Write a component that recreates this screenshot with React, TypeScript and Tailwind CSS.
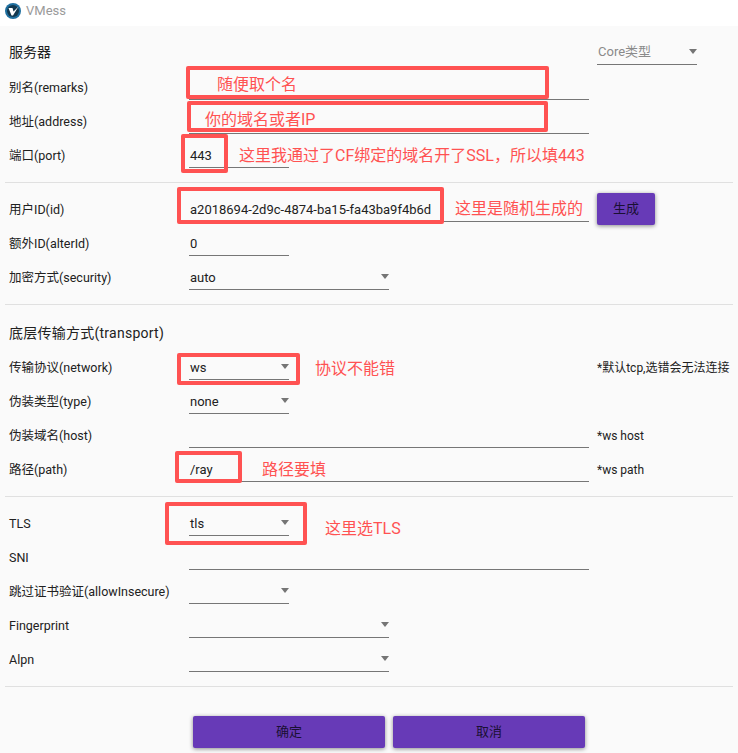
import React from 'react';

const labelFont = "font-['Roboto','Noto_Sans_CJK_SC',sans-serif]";

const Arrow = () => (
  <svg width="8" height="5" viewBox="0 0 8 5" className="absolute right-0 top-[10px]">
    <path d="M0 0H8L4 5Z" fill="#757575" />
  </svg>
);

interface FieldProps {
  value?: string;
  width: string;
  select?: boolean;
}

const Field: React.FC<FieldProps> = ({ value, width, select }) => (
  <div className={`relative h-[26px] ${width} border-b border-[#767676] pl-px pt-[2px] text-[13px] leading-[24px] text-[#212121]`}>
    {value}
    {select && <Arrow />}
  </div>
);

interface RowProps {
  label: string;
  children: React.ReactNode;
}

const Row: React.FC<RowProps> = ({ label, children }) => (
  <div className="flex h-[34px] items-end">
    <div className="h-[27px] w-[189px] pl-[9px] pt-[2px] text-[12.5px] leading-[26px] text-[#212121]">{label}</div>
    {children}
  </div>
);

const Note = ({ children }: { children: React.ReactNode }) => (
  <div className="ml-2 h-[26px] pt-[2px] text-[12px] leading-[24px] text-[#212121]">{children}</div>
);

const Divider = () => <div className="mx-[5px] h-px bg-[#e0e0e0]" />;

const Mark = ({ className }: { className: string }) => (
  <div className={`absolute rounded-[2px] border-4 border-[#ff5252] ${className}`} />
);

const Hint = ({ className, children }: { className: string; children: React.ReactNode }) => (
  <div className={`absolute whitespace-nowrap text-[16px] font-normal leading-[22px] text-[#ff5252] ${className}`}>{children}</div>
);

export default function App() {
  return (
    <div className={`relative h-[753px] w-[738px] overflow-hidden bg-[#fafafa] ${labelFont}`}>
      <div className="flex h-[26px] items-center gap-[5px] bg-white pl-[5px] pb-[4px]">
        <svg width="16" height="16" viewBox="0 0 16 16">
          <circle cx="8" cy="8" r="8" fill="#1f6f9f" />
          <circle cx="8" cy="8" r="6" fill="#12384f" />
          <path d="M3.5 5H7.5L8.5 8.5L13.5 3.5L8 12.5H6.5Z" fill="#ffffff" />
        </svg>
        <span className="text-[13px] text-[#9a9a9a]">VMess</span>
      </div>

      <div className="flex h-[40px] items-end justify-between pr-[41px]">
        <div className="h-[27px] pl-[9px] text-[14px] leading-[26px] text-[#212121]">服务器</div>
        <div className="relative mb-[1px] h-[26px] w-[100px] border-b border-[#767676] pl-px pt-px text-[13px] leading-[24px] text-[#8a8a8a]">
          Core类型
          <Arrow />
        </div>
      </div>
      <Row label="别名(remarks)"><Field width="w-[400px]" /></Row>
      <Row label="地址(address)"><Field width="w-[400px]" /></Row>
      <Row label="端口(port)"><Field width="w-[100px]" value="443" /></Row>
      <div className="h-[14px]" />
      <Divider />

      <div className="h-[5px]" />
      <Row label="用户ID(id)">
        <Field width="w-[400px]" value="a2018694-2d9c-4874-ba15-fa43ba9f4b6d" />
        <button className="mb-[-3px] ml-2 h-8 w-[58px] rounded-[2px] bg-[#673ab7] text-[13px] text-[#1a1033] shadow-[0_1px_4px_rgba(0,0,0,0.45)]">生成</button>
      </Row>
      <Row label="额外ID(alterId)"><Field width="w-[100px]" value="0" /></Row>
      <Row label="加密方式(security)"><Field width="w-[200px]" value="auto" select /></Row>
      <div className="h-[14px]" />
      <Divider />

      <div className="h-[41px] pt-[16px] pl-[9px] text-[14px] leading-[24px] tracking-[0.25px] text-[#212121]">底层传输方式(transport)</div>
      <Row label="传输协议(network)">
        <Field width="w-[100px]" value="ws" select />
        <div className="ml-[308px] h-[26px] whitespace-nowrap pt-[2px] text-[12px] leading-[24px] text-[#212121]">*默认tcp,选错会无法连接</div>
      </Row>
      <Row label="伪装类型(type)"><Field width="w-[100px]" value="none" select /></Row>
      <Row label="伪装域名(host)">
        <Field width="w-[400px]" />
        <Note>*ws host</Note>
      </Row>
      <Row label="路径(path)">
        <Field width="w-[400px]" value="/ray" />
        <Note>*ws path</Note>
      </Row>
      <div className="h-[14px]" />
      <Divider />

      <div className="h-[5px]" />
      <Row label="TLS"><Field width="w-[100px]" value="tls" select /></Row>
      <Row label="SNI"><Field width="w-[400px]" /></Row>
      <Row label="跳过证书验证(allowInsecure)"><Field width="w-[100px]" select /></Row>
      <Row label="Fingerprint"><Field width="w-[200px]" select /></Row>
      <Row label="Alpn"><Field width="w-[200px]" select /></Row>
      <div className="h-[14px]" />
      <Divider />

      <div className="mt-[29px] flex gap-2 pl-[193px]">
        <button className="h-8 w-[192px] rounded-[2px] bg-[#673ab7] text-[13px] text-[#1a1033] shadow-[0_1px_4px_rgba(0,0,0,0.45)]">确定</button>
        <button className="h-8 w-[192px] rounded-[2px] bg-[#673ab7] text-[13px] text-[#1a1033] shadow-[0_1px_4px_rgba(0,0,0,0.45)]">取消</button>
      </div>

      {/* red notes drawn on top of the form */}
      <Mark className="left-[186px] top-[66px] h-[33px] w-[363px]" />
      <Mark className="left-[187px] top-[101px] h-[31px] w-[361px]" />
      <Mark className="left-[181px] top-[134px] h-[39px] w-[47px]" />
      <Mark className="left-[177px] top-[187px] h-[37px] w-[267px]" />
      <Mark className="left-[177px] top-[353px] h-[32px] w-[123px]" />
      <Mark className="left-[175px] top-[451px] h-[32px] w-[67px]" />
      <Mark className="left-[165px] top-[502px] h-[43px] w-[142px]" />
      <Hint className="left-[217px] top-[74px]">随便取个名</Hint>
      <Hint className="left-[205px] top-[109px]">你的域名或者IP</Hint>
      <Hint className="left-[239px] top-[145px]">这里我通过了CF绑定的域名开了SSL，所以填443</Hint>
      <Hint className="left-[455px] top-[198px]">这里是随机生成的</Hint>
      <Hint className="left-[315px] top-[358px]">协议不能错</Hint>
      <Hint className="left-[262px] top-[459px]">路径要填</Hint>
      <Hint className="left-[325px] top-[518px]">这里选TLS</Hint>
    </div>
  );
}
